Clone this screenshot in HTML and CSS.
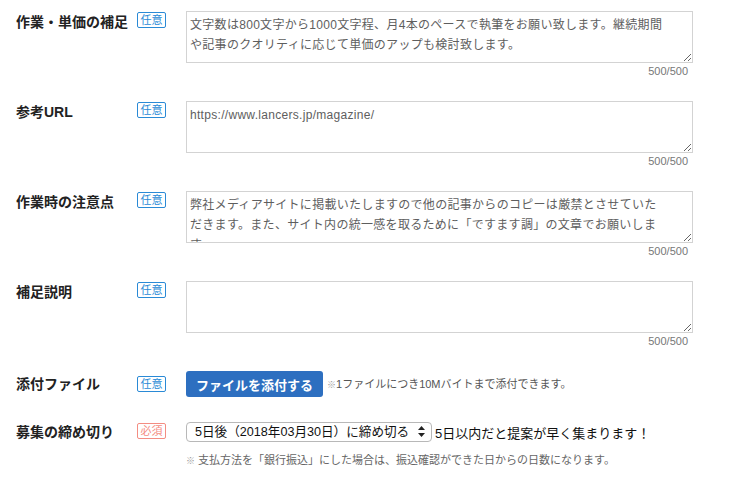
FILE: index.html
```html
<!DOCTYPE html>
<html lang="ja">
<head>
    <meta charset="UTF-8">
    <meta name="viewport" content="width=device-width, initial-scale=1.0">
    <title>依頼内容の入力</title>
    <link rel="stylesheet" href="styles.css">
</head>
<body>
    <div class="form">
        <div class="row">
            <div class="label">作業・単価の補足</div>
            <span class="badge">任意</span>
            <div class="field">
                <textarea class="text-box">文字数は800文字から1000文字程、月4本のペースで執筆をお願い致します。継続期間
や記事のクオリティに応じて単価のアップも検討致します。</textarea>
                <div class="counter">500/500</div>
            </div>
        </div>
        <div class="row">
            <div class="label">参考URL</div>
            <span class="badge">任意</span>
            <div class="field">
                <textarea class="text-box">https://www.lancers.jp/magazine/</textarea>
                <div class="counter">500/500</div>
            </div>
        </div>
        <div class="row">
            <div class="label">作業時の注意点</div>
            <span class="badge">任意</span>
            <div class="field">
                <textarea class="text-box">弊社メディアサイトに掲載いたしますので他の記事からのコピーは厳禁とさせていた
だきます。また、サイト内の統一感を取るために「ですます調」の文章でお願いしま
す。</textarea>
                <div class="counter">500/500</div>
            </div>
        </div>
        <div class="row">
            <div class="label">補足説明</div>
            <span class="badge">任意</span>
            <div class="field">
                <textarea class="text-box"></textarea>
                <div class="counter">500/500</div>
            </div>
        </div>
        <div class="row row-file">
            <div class="label">添付ファイル</div>
            <span class="badge">任意</span>
            <div class="field file-field">
                <button class="file-button">ファイルを添付する</button>
                <span class="note"><span class="mark">※</span>1ファイルにつき10Mバイトまで添付できます。</span>
            </div>
        </div>
        <div class="row row-deadline">
            <div class="label">募集の締め切り</div>
            <span class="badge badge-required">必須</span>
            <div class="field">
                <div class="select-line">
                    <span class="select-wrap">
                        <select class="select">
                            <option>5日後（2018年03月30日）に締め切る</option>
                        </select>
                        <svg class="select-arrows" width="7" height="11" viewBox="0 0 7 11">
                            <path d="M3.5 0 L7 4 L0 4 Z" fill="#222"/>
                            <path d="M0 7 L7 7 L3.5 11 Z" fill="#222"/>
                        </svg>
                    </span>
                    <span class="hint">5日以内だと提案が早く集まります！</span>
                </div>
                <div class="note note-below"><span class="mark">※</span> 支払方法を「銀行振込」にした場合は、振込確認ができた日からの日数になります。</div>
            </div>
        </div>
    </div>
</body>
</html>
```

FILE: styles.css
```css
body {
    margin: 0;
    background: #fff;
    font-family: "Liberation Sans", "Noto Sans CJK JP", sans-serif;
    color: #222;
}
.form {
    padding: 11px 0 0 16px;
}
.row {
    display: flex;
    align-items: flex-start;
    margin-bottom: 22px;
}
.label {
    width: 121px;
    margin-top: 1px;
    font-size: 14px;
    font-weight: bold;
    line-height: 20px;
    color: #222;
}
.badge {
    width: 29px;
    height: 16px;
    box-sizing: border-box;
    margin-top: 1px;
    border: 1px solid #2a8ad6;
    border-radius: 2px;
    font-size: 11px;
    line-height: 14px;
    text-align: center;
    color: #2a8ad6;
}
.badge-required {
    border-color: #f48d82;
    color: #f48d82;
}
.field {
    margin-left: 20px;
    width: 507px;
}
.text-box {
    display: block;
    width: 507px;
    height: 52px;
    box-sizing: border-box;
    margin: 0;
    padding: 3px 3px 1px;
    border: 1px solid #d3d3d3;
    font-family: "Liberation Sans", "Noto Sans CJK JP", sans-serif;
    font-size: 12px;
    letter-spacing: 0.3px;
    line-height: 20px;
    color: #5e5e5e;
    resize: vertical;
    overflow: hidden;
    white-space: pre;
}
.counter {
    padding-right: 5px;
    font-size: 11px;
    line-height: 16px;
    text-align: right;
    color: #777;
}
.row-file {
    align-items: center;
    margin-bottom: 25px;
}
.row-file .label,
.row-file .badge {
    margin-top: 0;
}
.file-field {
    display: flex;
    align-items: center;
}
.file-button {
    width: 137px;
    height: 26px;
    padding: 0;
    border: none;
    border-radius: 3px;
    background: #2d6fc0;
    font-family: "Liberation Sans", "Noto Sans CJK JP", sans-serif;
    font-size: 13px;
    font-weight: bold;
    color: #fff;
    cursor: pointer;
}
.note {
    margin-left: 4px;
    font-size: 11px;
    line-height: 16px;
    color: #555;
}
.mark {
    font-size: 9px;
    color: #999;
}
.row-deadline .label {
    margin-top: 0;
}
.row-deadline .badge {
    margin-top: 1px;
}
.select-line {
    display: flex;
    align-items: center;
    height: 20px;
}
.select-wrap {
    position: relative;
    display: inline-block;
}
.select {
    display: block;
    width: 246px;
    height: 20px;
    box-sizing: border-box;
    margin: 0;
    padding: 0 14px 0 8px;
    border: 1px solid #b8b8b8;
    border-radius: 4px;
    background: #fff;
    font-family: "Liberation Sans", "Noto Sans CJK JP", sans-serif;
    font-size: 12.6px;
    color: #111;
    appearance: none;
    -webkit-appearance: none;
}
.select-arrows {
    position: absolute;
    right: 7px;
    top: 4px;
    pointer-events: none;
}
.hint {
    margin-left: 3px;
    font-size: 13px;
    color: #111;
}
.note-below {
    margin: 10px 0 0 0;
    color: #666;
}
```
